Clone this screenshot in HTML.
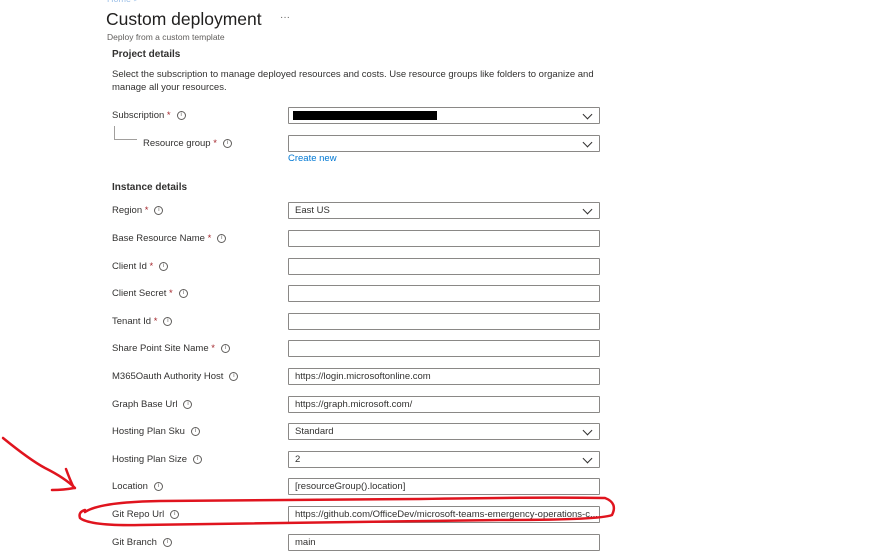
<!DOCTYPE html>
<html><head><style>
body{margin:0;width:881px;height:552px;background:#fff;font-family:"Liberation Sans",sans-serif;color:#323130;position:relative;overflow:hidden}
.a{position:absolute;white-space:nowrap}
.l{font-size:9.5px;left:112px}
.st{color:#a4262c}
.i{display:inline-block;width:7px;height:7px;border:1px solid #605e5c;border-radius:50%;font-size:6px;line-height:7px;text-align:center;vertical-align:middle;margin-left:6px;color:#605e5c}
.f{position:absolute;left:288px;height:15px;border:1px solid #8a8886;border-radius:1px;font-size:9.5px;line-height:15px;padding-left:6px;box-sizing:content-box;width:304px}
.dd::after{content:"";position:absolute;right:8px;top:3px;width:6px;height:6px;border-right:1px solid #323130;border-bottom:1px solid #323130;transform:rotate(45deg)}
</style></head><body>
<div class="a" style="left:107px;top:-6px;font-size:9px;color:#9ec1e8">Home &gt;</div>
<div class="a" style="left:106px;top:9px;font-size:17.5px;color:#201f1e">Custom deployment</div>
<div class="a" style="left:280px;top:12px;font-size:10px;color:#605e5c">···</div>
<div class="a" style="left:107px;top:32px;font-size:8.5px;color:#605e5c">Deploy from a custom template</div>
<div class="a" style="left:112px;top:49px;font-size:10px;font-weight:bold">Project details</div>
<div class="a" style="left:112px;top:69px;font-size:9.5px;line-height:12.5px;white-space:normal;width:490px">Select the subscription to manage deployed resources and costs. Use resource groups like folders to organize and manage all your resources.</div>
<div class="a l" style="top:110px">Subscription <span class="st">*</span><span class="i">i</span></div>
<div class="f dd" style="top:107px"><div style="position:absolute;left:4px;top:3px;width:144px;height:9px;background:#000"></div></div>
<div class="a" style="left:114px;top:126px;width:22px;height:13px;border-left:1px solid #a19f9d;border-bottom:1px solid #a19f9d"></div>
<div class="a" style="left:143px;top:138px;font-size:9.5px">Resource group <span class="st">*</span><span class="i">i</span></div>
<div class="f dd" style="top:135px"></div>
<div class="a" style="left:288px;top:153px;font-size:9.5px;color:#0078d4">Create new</div>
<div class="a" style="left:112px;top:182px;font-size:10px;font-weight:bold">Instance details</div>

<div class="a l" style="top:205px">Region <span class="st">*</span><span class="i">i</span></div><div class="f dd" style="top:202px">East US</div>
<div class="a l" style="top:233px">Base Resource Name <span class="st">*</span><span class="i">i</span></div><div class="f" style="top:230px"></div>
<div class="a l" style="top:261px">Client Id <span class="st">*</span><span class="i">i</span></div><div class="f" style="top:258px"></div>
<div class="a l" style="top:288px">Client Secret <span class="st">*</span><span class="i">i</span></div><div class="f" style="top:285px"></div>
<div class="a l" style="top:316px">Tenant Id <span class="st">*</span><span class="i">i</span></div><div class="f" style="top:313px"></div>
<div class="a l" style="top:343px">Share Point Site Name <span class="st">*</span><span class="i">i</span></div><div class="f" style="top:340px"></div>
<div class="a l" style="top:371px">M365Oauth Authority Host<span class="i">i</span></div><div class="f" style="top:368px">https://login.microsoftonline.com</div>
<div class="a l" style="top:399px">Graph Base Url<span class="i">i</span></div><div class="f" style="top:396px">https://graph.microsoft.com/</div>
<div class="a l" style="top:426px">Hosting Plan Sku<span class="i">i</span></div><div class="f dd" style="top:423px">Standard</div>
<div class="a l" style="top:454px">Hosting Plan Size<span class="i">i</span></div><div class="f dd" style="top:451px">2</div>
<div class="a l" style="top:481px">Location<span class="i">i</span></div><div class="f" style="top:478px">[resourceGroup().location]</div>
<div class="a l" style="top:509px">Git Repo Url<span class="i">i</span></div><div class="f" style="top:506px;overflow:hidden">https://github.com/OfficeDev/microsoft-teams-emergency-operations-c...</div>
<div class="a l" style="top:537px">Git Branch<span class="i">i</span></div><div class="f" style="top:534px">main</div>

<svg class="a" style="left:0;top:0" width="881" height="552" fill="none" stroke="#e0141e" stroke-width="2.5" stroke-linecap="round">
<path d="M3 438 Q30 460 45 468 Q65 478 75 488"/>
<path d="M66 469 Q70 480 74 488 Q64 490 52 490"/>
<path d="M85 512 Q100 502 160 501 Q300 500 420 499 Q540 497 605 498 Q618 503 612 515 Q600 520 500 520 Q300 522 140 525 Q90 526 80 518 Q78 512 85 510"/>
</svg>
</body></html>
